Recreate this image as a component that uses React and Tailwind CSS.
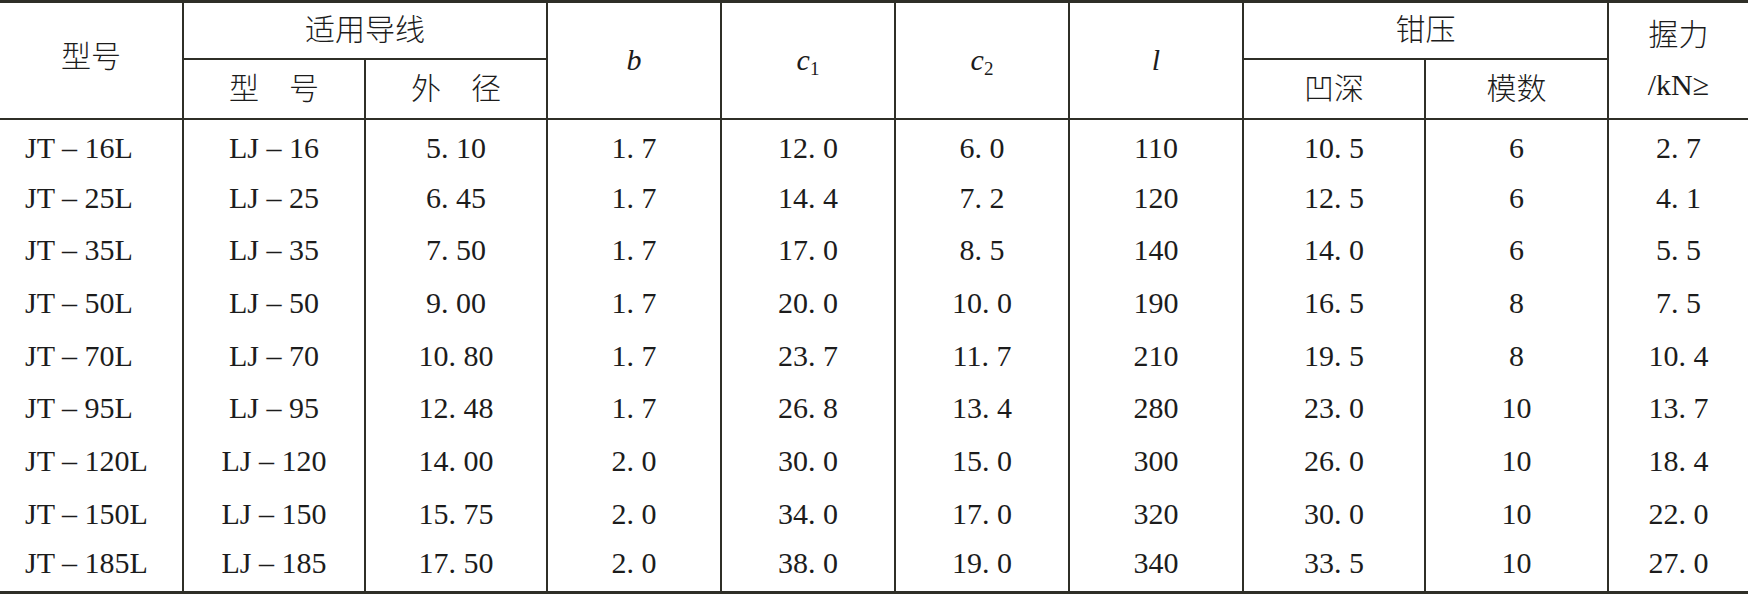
import React from 'react';

const rows = [
  ['JT – 16L', 'LJ – 16', '5. 10', '1. 7', '12. 0', '6. 0', '110', '10. 5', '6', '2. 7'],
  ['JT – 25L', 'LJ – 25', '6. 45', '1. 7', '14. 4', '7. 2', '120', '12. 5', '6', '4. 1'],
  ['JT – 35L', 'LJ – 35', '7. 50', '1. 7', '17. 0', '8. 5', '140', '14. 0', '6', '5. 5'],
  ['JT – 50L', 'LJ – 50', '9. 00', '1. 7', '20. 0', '10. 0', '190', '16. 5', '8', '7. 5'],
  ['JT – 70L', 'LJ – 70', '10. 80', '1. 7', '23. 7', '11. 7', '210', '19. 5', '8', '10. 4'],
  ['JT – 95L', 'LJ – 95', '12. 48', '1. 7', '26. 8', '13. 4', '280', '23. 0', '10', '13. 7'],
  ['JT – 120L', 'LJ – 120', '14. 00', '2. 0', '30. 0', '15. 0', '300', '26. 0', '10', '18. 4'],
  ['JT – 150L', 'LJ – 150', '15. 75', '2. 0', '34. 0', '17. 0', '320', '30. 0', '10', '22. 0'],
  ['JT – 185L', 'LJ – 185', '17. 50', '2. 0', '38. 0', '19. 0', '340', '33. 5', '10', '27. 0'],
];

const widths = ['w-[183px]', 'w-[182px]', 'w-[182px]', 'w-[174px]', 'w-[174px]', 'w-[174px]', 'w-[174px]', 'w-[182px]', 'w-[183px]', 'w-[140px]'];

export default function App() {
  const line = 'border-[#2f2f27]';
  return (
    <div className="w-[1748px] h-[594px] bg-white overflow-hidden">
      <table
        className={`w-[1748px] table-fixed border-collapse border-t-[3px] border-b-[3px] ${line} text-[30px] leading-none text-[#1c1c1c]`}
        style={{ fontFamily: '"Liberation Serif", "Noto Sans CJK SC", serif' }}
      >
        <colgroup>
          {widths.map((w, i) => (
            <col key={i} className={w} />
          ))}
        </colgroup>
        <thead>
          <tr className="h-[57px]">
            <th rowSpan={2} className={`font-light border-r-2 ${line} pb-[6px]`}>型号</th>
            <th colSpan={2} className={`font-light border-r-2 border-b-2 ${line}`}>适用导线</th>
            <th rowSpan={2} className={`font-normal italic border-r-2 ${line}`}>b</th>
            <th rowSpan={2} className={`font-normal border-r-2 ${line}`}>
              <i>c</i><sub className="text-[19px] not-italic">1</sub>
            </th>
            <th rowSpan={2} className={`font-normal border-r-2 ${line}`}>
              <i>c</i><sub className="text-[19px] not-italic">2</sub>
            </th>
            <th rowSpan={2} className={`font-normal italic border-r-2 ${line}`}>l</th>
            <th colSpan={2} className={`font-light border-r-2 border-b-2 ${line}`}>钳压</th>
            <th rowSpan={2} className="font-light">
              <div className="flex flex-col items-center gap-[20px]">
                <span>握力</span>
                <span className="font-normal">/kN≥</span>
              </div>
            </th>
          </tr>
          <tr className={`h-[60px] border-b-2 ${line}`}>
            <th className={`font-light border-r-2 ${line}`}>型　号</th>
            <th className={`font-light border-r-2 ${line}`}>外　径</th>
            <th className={`font-light border-r-2 ${line}`}>凹深</th>
            <th className={`font-light border-r-2 ${line}`}>模数</th>
          </tr>
        </thead>
        <tbody>
          {rows.map((r, i) => (
            <tr key={i} className="h-[52.7px]">
              {r.map((c, j) => (
                <td
                  key={j}
                  className={`${j === 0 ? 'text-left pl-[25px]' : 'text-center'} ${j < 9 ? `border-r-2 ${line}` : ''} ${i === 0 ? 'pt-[6px]' : ''} ${i === rows.length - 1 ? 'pb-[6px]' : ''}`}
                >
                  {c}
                </td>
              ))}
            </tr>
          ))}
        </tbody>
      </table>
    </div>
  );
}
